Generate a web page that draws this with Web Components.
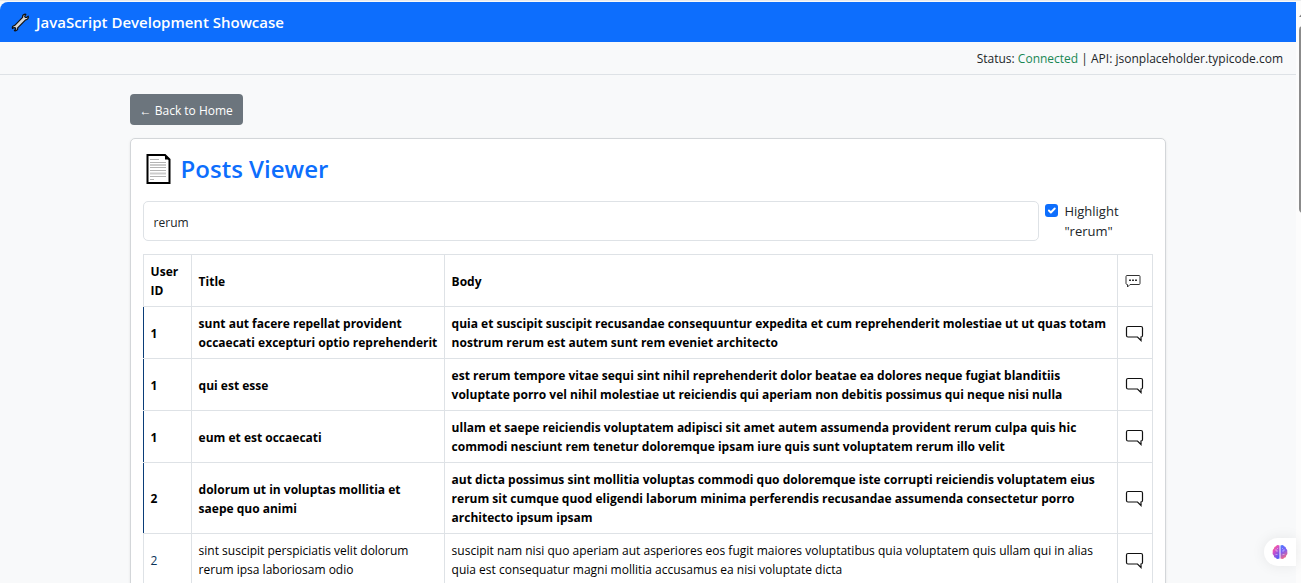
<!DOCTYPE html>
<html lang="en">
<head>
<meta charset="utf-8">
<title>JavaScript Development Showcase</title>
<style>
  html, body { height: 100%; }
  body { margin: 0; overflow: hidden; background: #f8f9fa; color: #212529; font: 12px/19px "Open Sans", "Noto Sans", sans-serif; }
</style>
</head>
<body>
<app-shell>
  <app-navbar slot="top">JavaScript Development Showcase</app-navbar>
  <status-bar slot="top" state="Connected">jsonplaceholder.typicode.com</status-bar>
  <back-link href="#home">Back to Home</back-link>
  <posts-card heading="Posts Viewer" query="rerum"></posts-card>
</app-shell>

<script>
class BaseElement extends HTMLElement {
  connectedCallback() {
    if (this.shadowRoot) return;
    this.attachShadow({ mode: 'open' }).innerHTML =
      `<style>*{box-sizing:border-box}:host{display:block}${this.css()}</style>${this.html()}`;
  }
  css() { return ''; }
}

class AppShell extends BaseElement {
  css() { return `
    :host { display: flex; height: 100vh; overflow: hidden; border-top: 1px solid #e9eaec; position: relative; }
    .page { flex: 1; min-width: 0; overflow: hidden; padding-top: 1px; }
    main { padding: 19px 10% 0; }
    .assistant { position: absolute; right: 5px; bottom: 18px; }`; }
  html() { return `
    <div class="page"><slot name="top"></slot><main><slot></slot></main></div>
    <scroll-track></scroll-track>
    <assistant-tab class="assistant"></assistant-tab>`; }
}

class ScrollTrack extends BaseElement {
  css() { return `
    :host { width: 5px; background: #fcfcfc; overflow: hidden; display: flex; flex-direction: column; }
    svg { display: block; width: 5px; height: 25px; flex: none; }
    .thumb { height: 32%; margin-left: 3px; width: 8px; border-radius: 4px; background: #8b8b8b; }`; }
  html() { return `
    <svg viewBox="0 0 5 25"><path d="M3 16l4-5 4 5z" fill="#7d7d7d"/></svg>
    <div class="thumb"></div>`; }
}

class AppNavbar extends BaseElement {
  css() { return `
    :host { display: flex; align-items: center; gap: 6px; height: 40px; padding: 0 11px; background: #0d6efd;
      border-radius: 8px 0 0 0; color: #fff; font-size: 15px; font-weight: 600; line-height: 24px; }
    svg { width: 19px; height: 19px; flex: none; }`; }
  html() { return `
    <svg viewBox="0 0 19 19" aria-hidden="true">
      <path d="M1.500 13.600l2.300-1.300 7.800-7.900c-.2-1.700.8-3 2.500-3.200l.8.100-1.200 1.900.5 1.100 1.300.2 1.700-1.300c.7 1.900-.6 3.600-2.600 3.700l-7.900 7.900c.3 1.700-.8 3.100-2.400 3.100l-.9-.2 1.400-1.800-.5-1.100-1.300-.2-1.500.9c-.3-.7-.2-1.300 0-1.900z" fill="#d6d6d6" stroke="#111" stroke-width="1.200" stroke-linejoin="round"/>
    </svg><span><slot></slot></span>`; }
}

class StatusBar extends BaseElement {
  css() { return `
    :host { padding: 7px 13px 6px; border-bottom: 1px solid #dee2e6; text-align: right; }
    b { font-weight: 400; color: #198754; }`; }
  html() { return `Status: <b>${this.getAttribute('state')}</b> | API: <slot></slot>`; }
}

class BackLink extends BaseElement {
  css() { return `
    a { display: inline-flex; align-items: center; height: 31px; padding: 2px 10px 0; border-radius: 4px; background: #6c757d;
      color: #fff; text-decoration: none; vertical-align: top; white-space: pre; }`; }
  html() { return `<a href="${this.getAttribute('href')}">← <slot></slot></a>`; }
}

class SearchRow extends BaseElement {
  css() { return `
    :host { display: grid; grid-template-columns: minmax(0, 1fr) 108px; gap: 6px; }
    .field { width: 100%; height: 40px; padding: 2px 10px 0; border: 1px solid #dee2e6; border-radius: 5px; background: #fff;
      color: #212529; font: inherit; outline: 0; }
    .check { display: flex; gap: 6px; font-size: 13px; line-height: 20px; padding-right: 24px; }
    .check input { appearance: none; flex: none; width: 13px; height: 13px; margin: 3px 0 0; border-radius: 3px;
      background: #0d6efd url("data:image/svg+xml,%3Csvg xmlns='http://www.w3.org/2000/svg' viewBox='0 0 20 20'%3E%3Cpath fill='none' stroke='%23fff' stroke-linecap='round' stroke-linejoin='round' stroke-width='3' d='m6 10 3 3 6-6'/%3E%3C/svg%3E") center/contain; }`; }
  html() { const q = this.getAttribute('query'); return `
    <input class="field" type="text" aria-label="Search posts" value="${q}">
    <div class="check"><input id="hl" type="checkbox" checked><label for="hl">Highlight "${q}"</label></div>`; }
}

const POSTS = [
  [1, 'sunt aut facere repellat provident occaecati excepturi optio reprehenderit', 'quia et suscipit suscipit recusandae consequuntur expedita et cum reprehenderit molestiae ut ut quas totam nostrum rerum est autem sunt rem eveniet architecto', true],
  [1, 'qui est esse', 'est rerum tempore vitae sequi sint nihil reprehenderit dolor beatae ea dolores neque fugiat blanditiis voluptate porro vel nihil molestiae ut reiciendis qui aperiam non debitis possimus qui neque nisi nulla', true],
  [1, 'eum et est occaecati', 'ullam et saepe reiciendis voluptatem adipisci sit amet autem assumenda provident rerum culpa quis hic commodi nesciunt rem tenetur doloremque ipsam iure quis sunt voluptatem rerum illo velit', true],
  [2, 'dolorum ut in voluptas mollitia et saepe quo animi', 'aut dicta possimus sint mollitia voluptas commodi quo doloremque iste corrupti reiciendis voluptatem eius rerum sit cumque quod eligendi laborum minima perferendis recusandae assumenda consectetur porro architecto ipsum ipsam', true],
  [2, 'sint suscipit perspiciatis velit dolorum rerum ipsa laboriosam odio', 'suscipit nam nisi quo aperiam aut asperiores eos fugit maiores voluptatibus quia voluptatem quis ullam qui in alias quia est consequatur magni mollitia accusamus ea nisi voluptate dicta', false],
];

class PostsTable extends BaseElement {
  css() { return `
    table { width: 100%; table-layout: fixed; border-collapse: collapse; color: #000; }
    th, td { padding: 7px 6px 6px 7px; border: 1px solid #dee2e6; text-align: left; vertical-align: middle; }
    th { font-weight: 700; }
    .marked td { font-weight: 700; }
    .marked td:first-child { border-left-color: #0a3d78; }
    tr:not(.marked) td:first-child { color: #0a3358; }
    .id { width: 48px; } .title { width: 253px; } .talk { width: 35px; }
    button { display: block; padding: 0; border: 0; background: none; color: #111; }
    svg { display: block; }`; }
  html() { return `
    <table>
      <colgroup><col class="id"><col class="title"><col><col class="talk"></colgroup>
      <thead><tr><th>User ID</th><th>Title</th><th>Body</th><th aria-label="Comments">
        <svg width="16" height="14" viewBox="0 0 16 14"><path d="M2 1.500h12q1 0 1 1v7q0 1-1 1H5l-2.500 2.500v-2.500q-1.500 0-1.500-1v-7q0-1 1-1z" fill="none" stroke="#333"/><path d="M4 5.500h2v1.500H4zM7 5.500h2v1.500H7zM10 5.500h2v1.500h-2z" fill="#333"/></svg></th></tr></thead>
      <tbody>${POSTS.map(([id, title, body, marked]) => `
        <tr class="${marked ? 'marked' : ''}"><td>${id}</td><td>${title}</td><td>${body}</td><td><button aria-label="Show comments">
        <svg width="19" height="17" viewBox="0 0 19 17"><path d="M3 1.500h13q1.500 0 1.500 1.500v7.500q0 1.500-1.500 1.500v3.500l-3.500-3.500H3q-1.500 0-1.500-1.500V3q0-1.500 1.500-1.500z" fill="none" stroke="currentColor" stroke-width="1.2"/></svg></button></td></tr>`).join('')}
      </tbody>
    </table>`; }
}

class PostsCard extends BaseElement {
  css() { return `
    :host { margin-top: 13px; padding: 12px; border: 1px solid #d3d6d9; border-radius: 5px; background: #fff; box-shadow: 0 1px 3px rgba(0,0,0,.08); }
    h1 { display: flex; align-items: center; gap: 10px; margin: 0 0 14px; padding: 0 3px; height: 36px; color: #0d6efd;
      font-size: 24px; font-weight: 600; line-height: 36px; }
    search-row { margin-bottom: 13px; }`; }
  html() { return `
    <h1><svg width="25" height="30" viewBox="0 0 25 30" aria-hidden="true"><path d="M1.500 1h17.500L23.500 5.500V29H1.500z" fill="#fff" stroke="#000" stroke-width="2"/><path d="M19 1v4.500h4.500z" fill="#000"/><path d="M4 5.500h9M4 8.500h16M4 13.500h16M4 16.500h16M4 22.500h16M4 25.500h4" stroke="#b4b4b4"/><path d="M4 11h16M4 19.500h16" stroke="#ccc" stroke-width="2"/></svg><span>${this.getAttribute('heading')}</span></h1>
    <search-row query="${this.getAttribute('query')}"></search-row>
    <posts-table></posts-table>`; }
}

class AssistantTab extends BaseElement {
  css() { return `
    button { display: flex; align-items: center; width: 32px; height: 28px; padding: 0 0 0 8px; border: 0; border-radius: 14px 0 0 14px;
      background: #fff; box-shadow: 0 0 14px rgba(0,0,0,.08); }`; }
  html() { return `
    <button aria-label="Open assistant"><svg width="16" height="16" viewBox="0 0 16 16">
      <defs><linearGradient id="l" x1="0" y1="0" x2="0.600" y2="1"><stop offset="0" stop-color="#ff8a3c"/><stop offset=".4" stop-color="#e24fc0"/><stop offset="1" stop-color="#5b5bf5"/></linearGradient>
      <linearGradient id="r" x1="0" y1="0" x2="0.300" y2="1"><stop offset="0" stop-color="#4d7dff"/><stop offset=".5" stop-color="#7a5cf5"/><stop offset="1" stop-color="#f06a8a"/></linearGradient></defs>
      <path d="M7.500 1.500v13q-2.500 1.300-3.800-.8-2-.2-1.900-2.300Q0 10 .7 7.800.2 5.800 2 4.600 2 2.600 3.900 2.200 5.400 0 7.500 1.500z" fill="url(#l)"/>
      <path d="M8.500 1.500v13q2.500 1.300 3.800-.8 2-.2 1.900-2.300Q16 10 15.300 7.800 15.800 5.800 14 4.600 14 2.600 12.100 2.200 10.600 0 8.500 1.500z" fill="url(#r)"/>
      <path d="M3 6h2v2M5.500 4v1M3.500 10.500h2M13 6h-2v2M10.500 4v1M12.500 10.500h-2" fill="none" stroke="#fff" stroke-opacity=".6" stroke-width=".7"/>
    </svg></button>`; }
}

customElements.define('app-shell', AppShell);
customElements.define('scroll-track', ScrollTrack);
customElements.define('app-navbar', AppNavbar);
customElements.define('status-bar', StatusBar);
customElements.define('back-link', BackLink);
customElements.define('search-row', SearchRow);
customElements.define('posts-table', PostsTable);
customElements.define('posts-card', PostsCard);
customElements.define('assistant-tab', AssistantTab);
</script>
</body>
</html>
